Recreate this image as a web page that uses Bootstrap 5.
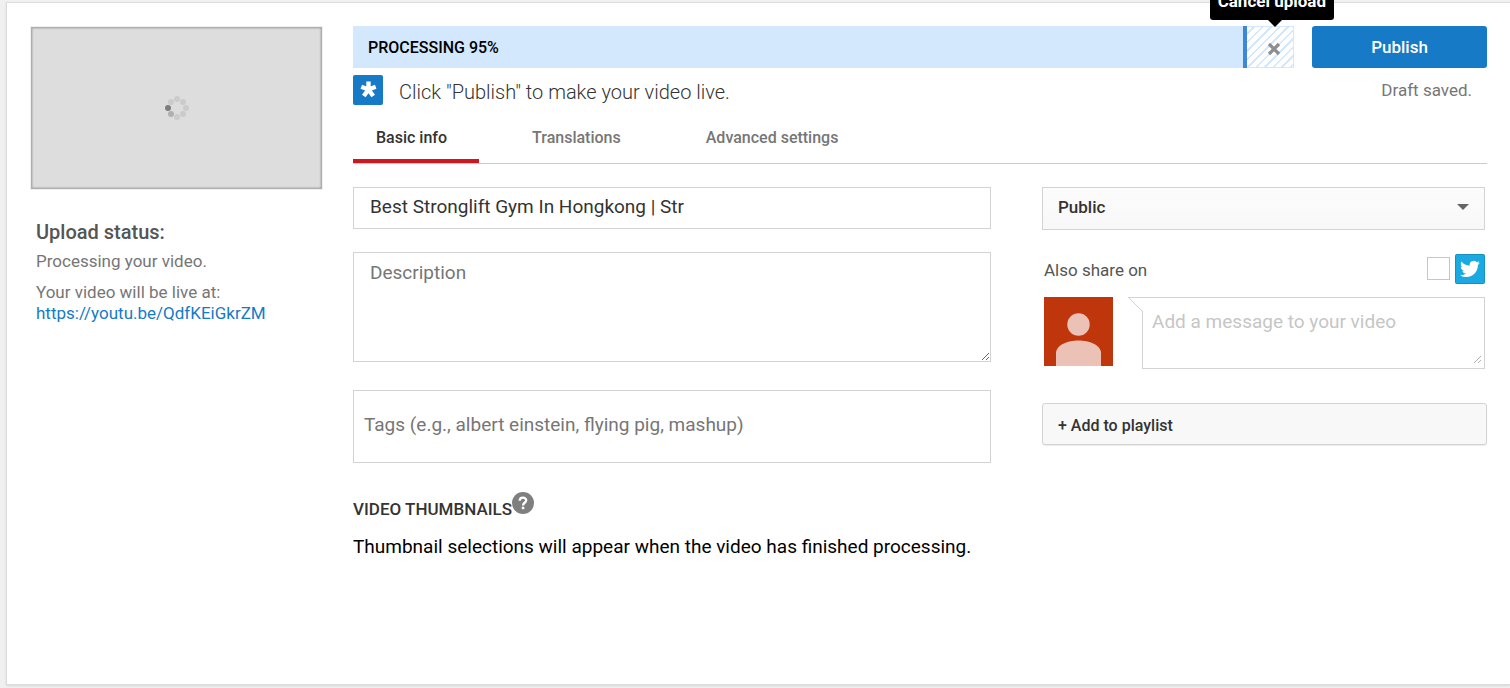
<!DOCTYPE html>
<html lang="en">
<head>
<meta charset="utf-8">
<meta name="viewport" content="width=device-width, initial-scale=1">
<title>Upload video</title>
<link rel="stylesheet" href="https://cdn.jsdelivr.net/npm/bootstrap@5.3.0/dist/css/bootstrap.min.css">
<style>
  body { background: #f0f0f0; font-family: Roboto, sans-serif; font-size: 17px; line-height: 21px; color: #333; }
  .upload-panel { margin: 2px 0 3px 6px; min-height: calc(100vh - 5px); background: #fff; border: 1px solid #dcdcdc; border-right: 0; box-shadow: 0 1px 2px rgba(0,0,0,.1); padding: 23px 23px 24px 24px; gap: 30px; }
  .side { width: 292px; }
  .preview { height: 162px; margin: 1px 1px 0 0; background: #ddd; border: 1px solid #adadad; box-shadow: inset 0 0 2px rgba(0,0,0,.4), 0 0 0 1px #f1f1f1; }
  .status { padding: 31px 5px 0; color: #767676; }
  .status h2 { font-size: 20px; line-height: 24px; font-weight: 500; color: #555; margin: 0 0 7px; }
  .status p { margin: 0 0 10px; }
  a, a:hover { color: #167ac6; text-decoration: none; }
  .main-area { min-width: 0; }
  .topbar { gap: 18px; height: 42px; }
  .upload-bar { background: #d3e8fc; }
  .upload-fill { padding-left: 15px; color: #000; font-weight: 500; font-size: 16px; border-right: 4px solid #3c87d8; }
  .upload-rest { border: 1px solid #d3e8fc; border-left: 0; background: repeating-linear-gradient(135deg, #fff 0 4px, #d3e8fc 4px 6px); }
  .cancel-btn { border: 0; background: none; padding: 4px 0 0 8px; }
  .tip { right: -41px; bottom: 47px; background: #000; color: #fff; font-weight: 700; border-radius: 3px; padding: 8px; white-space: nowrap; }
  .tip::after { content: ""; position: absolute; top: 100%; right: 52px; border: 7px solid transparent; border-top-color: #000; border-bottom: 0; }
  .publish-btn { width: 175px; background: #167ac6; color: #fff; border: 0; border-radius: 3px; font-size: 17px; font-weight: 500; padding: 2px 0 0; }
  .publish-btn:hover { background: #126db3; color: #fff; }
  .hint { margin-top: 7px; height: 30px; font-size: 20px; font-weight: 300; gap: 16px; }
  .hint span { line-height: 24px; padding-top: 5px; }
  .hint .draft { font-size: 17px; font-weight: 400; padding: 3px 15px 0 0; color: #767676; }
  .tabs { margin-top: 14px; border-bottom: 1px solid #ccc; gap: 30px; }
  .tab-link { border: 0; border-bottom: 4px solid transparent; background: none; padding: 8px 32px 11px 23px; height: 44px; font-size: 16px; font-weight: 500; color: #767676; line-height: 21px; }
  .tab-link.active { color: #333; border-color: #cc181e; }
  .form-area { margin-top: 23px; display: grid; grid-template-columns: 638fr 445fr; gap: 51px; }
  .field { border: 1px solid #d3d3d3; border-radius: 0; font-size: 19px; line-height: 24px; padding: 7px 16px 9px; color: #333; display: block; width: 100%; }
  .field::placeholder { color: #767676; opacity: 1; }
  .desc { height: 110px; margin-top: 23px; padding-top: 8px; resize: both; }
  .tags { height: 73px; margin-top: 28px; padding: 4px 10px 8px; }
  .thumb-title { font-size: 17px; line-height: 22px; font-weight: 500; margin: 29px 0 15px; color: #333; }
  .thumb-title span { padding-top: 6px; }
  .thumb-text { font-size: 19px; line-height: 24px; color: #000; }
  .share-col { padding-right: 2px; }
  .privacy { height: 43px; font-weight: 500; font-size: 17px; color: #333; padding: 0 40px 2px 15px; border: 1px solid #d3d3d3; border-radius: 0; appearance: none;
    background: url("data:image/svg+xml,%3Csvg xmlns='http://www.w3.org/2000/svg' viewBox='0 0 12 6'%3E%3Cpath fill='%23666' d='M0 0h12L6 6z'/%3E%3C/svg%3E") no-repeat right 15px top 16px / 12px 6px, linear-gradient(#fcfcfc, #f8f8f8); }
  .share-row { margin-top: 24px; height: 30px; gap: 5px; padding-left: 2px; color: #555; }
  .share-row label { padding-top: 6px; }
  .share-check { appearance: none; width: 23px; height: 23px; border: 1px solid #c6c6c6; background: #fff; margin: 3px 0 0; }
  .share-check:checked { background: #167ac6; }
  .message-row { margin-top: 13px; gap: 29px; padding-left: 2px; }
  .message-box { border: 1px solid #d3d3d3; padding: 0 2px 4px 0; height: 72px; }
  .message { height: 66px; border: 0; padding: 12px 9px 0; resize: both; background: none; opacity: .5; outline-offset: -2px; }
  .message::placeholder { color: #8d8d8d; }
  .tail { left: -15px; top: -1px; }
  .playlist-btn { height: 42px; margin-top: 34px; background: #f8f8f8; border: 1px solid #d3d3d3; border-radius: 3px; box-shadow: 0 1px 1px rgba(0,0,0,.08); font-size: 16px; font-weight: 500; color: #333; padding: 2px 15px 0; text-align: left; }
</style>
</head>
<body>
<div class="upload-panel d-flex align-items-start">
  <aside class="side flex-shrink-0">
    <div class="preview d-flex align-items-center justify-content-center">
      <svg width="26" height="26" viewBox="-13 -13 26 26" fill="#cbcbcb" aria-label="Loading">
        <circle cy="-9" r="3"/><circle cx="6" cy="-6" r="3"/><circle cx="9" r="3"/><circle cx="6" cy="6" r="3"/><circle cy="9" r="3"/><circle cx="-6" cy="-6" r="3"/>
        <circle cx="-6" cy="6" r="3" fill="#b0b0b0"/><circle cx="-9" r="3" fill="#7d7d7d"/>
      </svg>
    </div>
    <div class="status">
      <h2>Upload status:</h2>
      <p>Processing your video.</p>
      <div>Your video will be live at:</div>
      <a href="https://youtu.be/QdfKEiGkrZM">https://youtu.be/QdfKEiGkrZM</a>
    </div>
  </aside>

  <main class="main-area flex-grow-1">
    <div class="topbar d-flex">
      <div class="upload-bar d-flex flex-grow-1">
        <div class="upload-fill d-flex align-items-center" style="width:95%">PROCESSING 95%</div>
        <div class="upload-rest d-flex flex-grow-1 position-relative">
          <button type="button" class="cancel-btn w-100" aria-label="Cancel upload">
            <svg width="14" height="14" viewBox="0 0 14 14" class="d-block mx-auto"><path d="M2 2l10 10M12 2l-10 10" stroke="#8e8e8e" stroke-width="3.2"/></svg>
          </button>
          <div class="tip position-absolute" role="tooltip">Cancel upload</div>
        </div>
      </div>
      <button type="button" class="btn publish-btn flex-shrink-0">Publish</button>
    </div>

    <div class="hint d-flex">
      <svg width="30" height="30" viewBox="0 0 30 30"><rect width="30" height="30" rx="2" fill="#167ac6"/><path d="M15.500 14.500V6.500M15.500 14.500l7.200-2.700M15.500 14.500l4.700 6.500M15.500 14.500l-4.700 6.500M15.500 14.500l-7.200-2.700" stroke="#fff" stroke-width="4.400"/></svg>
      <span class="flex-grow-1">Click "Publish" to make your video live.</span>
      <span class="draft">Draft saved.</span>
    </div>

    <div class="tabs d-flex" role="tablist">
      <button type="button" class="tab-link active" role="tab" aria-selected="true">Basic info</button>
      <button type="button" class="tab-link" role="tab" aria-selected="false">Translations</button>
      <button type="button" class="tab-link" role="tab" aria-selected="false">Advanced settings</button>
    </div>

    <form class="form-area">
      <div>
        <input type="text" class="field" aria-label="Title" value="Best Stronglift Gym In Hongkong | Str">
        <textarea class="field desc" aria-label="Description" placeholder="Description"></textarea>
        <input type="text" class="field tags" aria-label="Tags" placeholder="Tags (e.g., albert einstein, flying pig, mashup)">
        <h3 class="thumb-title d-flex align-items-start"><span>VIDEO THUMBNAILS</span>
          <svg width="22" height="22" viewBox="0 0 22 22"><circle cx="11" cy="11" r="11" fill="#7f7f7f"/><path d="M7.700 8.700C7.700 4.600 14.200 4.800 14.200 8.300 14.200 10.700 11 10.800 11 13.400" fill="none" stroke="#fff" stroke-width="2.300"/><rect x="9.800" y="14.700" width="2.500" height="2.500" fill="#fff"/></svg>
        </h3>
        <div class="thumb-text">Thumbnail selections will appear when the video has finished processing.</div>
      </div>
      <div>
        <div class="share-col">
          <select class="privacy w-100 d-block" aria-label="Privacy"><option>Public</option><option>Unlisted</option><option>Private</option></select>
          <div class="share-row d-flex align-items-start">
            <label for="tw" class="flex-grow-1">Also share on</label>
            <input type="checkbox" id="tw" class="share-check">
            <svg width="30" height="30" viewBox="0 0 30 30"><rect x=".5" y=".5" width="29" height="29" rx="1" fill="#1aa9e1" stroke="#1490c4"/><path transform="translate(5 5) scale(.83)" fill="#fff" d="M23.950 4.570a10 10 0 0 1-2.820.77 4.960 4.960 0 0 0 2.160-2.720c-.95.55-2 .95-3.130 1.180a4.920 4.920 0 0 0-8.380 4.480C7.690 8.100 4.070 6.130 1.640 3.160a4.820 4.820 0 0 0-.67 2.480c0 1.710.87 3.210 2.190 4.100a4.900 4.900 0 0 1-2.230-.62v.06a4.920 4.920 0 0 0 3.950 4.830 5 5 0 0 1-2.210.08 4.940 4.940 0 0 0 4.600 3.420A9.870 9.870 0 0 1 0 19.540a14 14 0 0 0 7.550 2.210c9.050 0 14-7.500 14-13.980 0-.21 0-.42-.02-.63a9.940 9.940 0 0 0 2.420-2.570z"/></svg>
          </div>
          <div class="message-row d-flex">
            <svg width="69" height="69" viewBox="0 0 69 69" class="flex-shrink-0" aria-label="Your avatar"><path fill="#bf360c" d="M0 0h69v69H0z"/><g fill="#ecc2b7"><circle cx="34.500" cy="27.500" r="11.200"/><path d="M12 69V56C12 48 24 43.500 34.500 43.500S57 48 57 56v13z"/></g></svg>
            <div class="message-box position-relative flex-grow-1">
              <textarea class="field message" aria-label="Message" placeholder="Add a message to your video"></textarea>
              <svg class="tail position-absolute" width="15" height="15" viewBox="0 0 15 15"><path d="M0 0h15v14z" fill="#fff"/><path d="M0 .5h15M.5.500L14.500 14.500" stroke="#d3d3d3" fill="none"/></svg>
            </div>
          </div>
        </div>
        <button type="button" class="playlist-btn w-100">+ Add to playlist</button>
      </div>
    </form>
  </main>
</div>
<script src="https://cdn.jsdelivr.net/npm/bootstrap@5.3.0/dist/js/bootstrap.bundle.min.js"></script>
</body>
</html>
